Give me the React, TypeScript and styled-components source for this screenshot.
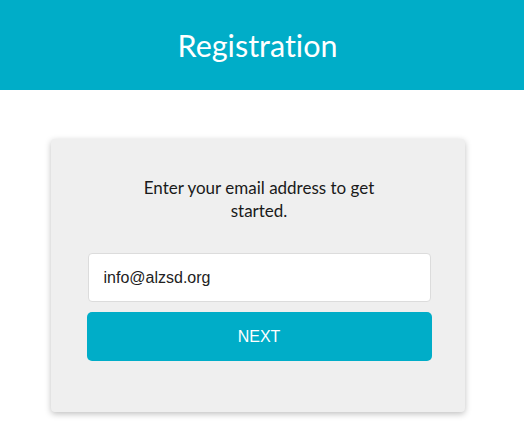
import React, {useEffect, useRef, useState} from 'react';
import styled, {createGlobalStyle} from 'styled-components';

const GlobalStyle = createGlobalStyle`
    html, body {
        margin: 0;
        padding: 0;
        background: #ffffff;
    }
`;

const Page = styled.div`
    display: flex;
    flex-direction: column;
    min-height: 431px;
`;

const Header = styled.header`
    height: 90px;
    background: #00adc8;
    display: flex;
    align-items: center;
    justify-content: center;
    padding-right: 9px;
`;

const Title = styled.h1`
    margin: 0;
    font-family: Lato, 'Noto Sans', sans-serif;
    font-weight: 400;
    font-size: 30.5px;
    font-variant-ligatures: none;
    color: #ffffff;
`;

const Main = styled.main`
    display: flex;
    justify-content: center;
    padding: 49px 9px 0 0;
`;

const Card = styled.div`
    width: 414px;
    box-sizing: border-box;
    padding: 37px 33px 51px 36px;
    background: #efefef;
    border-radius: 4px;
    box-shadow: 0 2px 6px rgba(0, 0, 0, 0.25);
    display: flex;
    flex-direction: column;
    align-items: stretch;
`;

const Intro = styled.p`
    margin: 0 auto 31px auto;
    max-width: 260px;
    text-align: center;
    font-family: Lato, 'Noto Sans', sans-serif;
    font-size: 17px;
    line-height: 23px;
    font-variant-ligatures: none;
    color: #1a1a1a;
`;

const EmailInput = styled.input`
    height: 49px;
    box-sizing: border-box;
    margin: 0 1px;
    padding: 0 15px;
    border: 1px solid #dcdcdc;
    border-radius: 4px;
    background: #ffffff;
    font-family: 'Liberation Sans', Arial, sans-serif;
    font-size: 16px;
    color: #222222;
    caret-color: #000000;
    outline: none;
`;

const NextButton = styled.button`
    margin-top: 10px;
    height: 49px;
    border: none;
    border-radius: 5px;
    background: #00adc8;
    color: #ffffff;
    font-family: 'Liberation Sans', Arial, sans-serif;
    font-size: 16px;
    cursor: pointer;
`;

const App = () => {
    const [email, setEmail] = useState('info@alzsd.org');
    const inputRef = useRef<HTMLInputElement>(null);

    useEffect(() => {
        const input = inputRef.current;
        if (input) {
            input.focus();
            input.setSelectionRange(email.length, email.length);
        }
    }, []);

    return (
        <Page>
            <GlobalStyle/>
            <Header>
                <Title>Registration</Title>
            </Header>
            <Main>
                <Card>
                    <Intro>Enter your email address to get started.</Intro>
                    <EmailInput
                        ref={inputRef}
                        type="text"
                        value={email}
                        onChange={e => setEmail(e.target.value)}
                    />
                    <NextButton>NEXT</NextButton>
                </Card>
            </Main>
        </Page>
    )
};

export default App;
